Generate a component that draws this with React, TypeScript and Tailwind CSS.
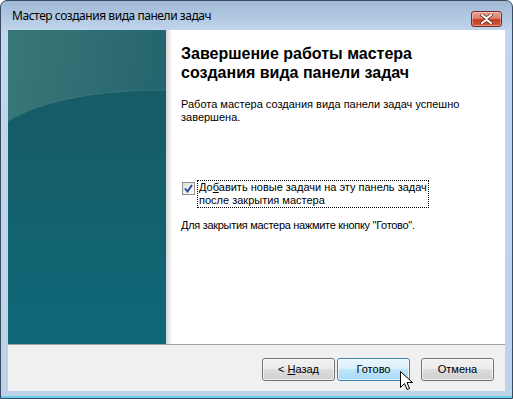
import React from "react";

const body = { fontFamily: '"Liberation Sans", Arial, sans-serif' } as React.CSSProperties;

function Btn({ children, hot }: { children: React.ReactNode; hot?: boolean }) {
  return (
    <div
      className={
        "relative flex h-[23px] w-[73px] items-center justify-center rounded-[3px] border text-[11px] text-black " +
        (hot
          ? "border-[#3c7fb1] bg-[linear-gradient(to_bottom,#eaf6fd_0%,#d9f0fc_50%,#bee6fd_50%,#a7d9f5_100%)]"
          : "border-[#707070] bg-[linear-gradient(to_bottom,#f2f2f2_0%,#ebebeb_50%,#dddddd_50%,#cfcfcf_100%)]")
      }
      style={body}
    >
      <div className="pointer-events-none absolute inset-0 rounded-[2px] border border-white/70" />
      <span className="relative">{children}</span>
    </div>
  );
}

export default function App() {
  return (
    <div className="h-[399px] w-[513px] bg-white">
      <div className="flex h-[399px] w-[513px] flex-col overflow-hidden rounded-t-[7px] border border-[#394b5f] bg-[linear-gradient(to_bottom,#9fb9d5_0px,#b6cce5_20px,#c2d6ed_30px,#bdd3ea_100%)] shadow-[inset_0_-2px_0_#6fcfeb]">
        {/* title bar */}
        <div className="relative flex h-[29px] shrink-0 items-center pl-[11px]">
          <span
            className="text-[12px] text-black"
            style={{ fontFamily: '"Noto Sans", "Open Sans", sans-serif', letterSpacing: "-0.45px" }}
          >
            Мастер создания вида панели задач
          </span>
          <div className="absolute right-[10px] top-[10px] flex h-[16px] w-[31px] items-center justify-center rounded-[3px] border border-[#7a2a24] bg-[linear-gradient(to_bottom,#eba395_0%,#dc7f6c_45%,#c23a22_55%,#d35c40_100%)] shadow-[inset_0_0_0_1px_rgba(255,255,255,0.35)]">
            <svg width="13" height="10" viewBox="0 0 13 10">
              <path d="M2 1 L6.5 4.3 L11 1 M2 9 L6.5 5.7 L11 9" stroke="#5a2a24" strokeWidth="3.4" fill="none" strokeLinecap="square" />
              <path d="M2 1 L6.5 4.3 L11 1 M2 9 L6.5 5.7 L11 9" stroke="#ffffff" strokeWidth="2" fill="none" strokeLinecap="square" />
            </svg>
          </div>
        </div>
        {/* client */}
        <div className="mx-[7px] mb-[7px] flex flex-1 flex-col bg-[#f0f0f0]">
          <div className="flex h-[314px] shrink-0">
            <div className="w-[158px] shrink-0">
              <svg width="158" height="314" viewBox="0 0 158 314">
                <defs>
                  <linearGradient id="tg" x1="0" y1="0" x2="1" y2="0.35">
                    <stop offset="0" stopColor="#3a7878" />
                    <stop offset="1" stopColor="#23636c" />
                  </linearGradient>
                  <linearGradient id="bg2" x1="0" y1="0" x2="0" y2="1">
                    <stop offset="0" stopColor="#175b65" />
                    <stop offset="1" stopColor="#0f6878" />
                  </linearGradient>
                </defs>
                <rect width="158" height="314" fill="url(#tg)" />
                <path d="M0 91 C35 70 90 60 158 60 L158 314 L0 314 Z" fill="url(#bg2)" />
                <path d="M0 91 C35 70 90 60 158 60" stroke="#4a8888" strokeWidth="1" fill="none" opacity="0.5" />
              </svg>
            </div>
            <div className="relative flex-1 bg-white pl-[15px]" style={body}>
              <div className="pointer-events-none absolute inset-y-0 left-0 w-[6px] bg-[linear-gradient(to_right,#d4d4d4,#ffffff)]" />
              <div
                className="relative pt-[14px] text-[16px] font-bold leading-[19px] text-black"
                style={{ fontFamily: '"Liberation Sans", Arial, sans-serif' }}
              >
                Завершение работы мастера
                <br />
                создания вида панели задач
              </div>
              <div className="relative mt-[16px] text-[11px] leading-[13px] text-black">
                Работа мастера создания вида панели задач успешно
                <br />
                завершена.
              </div>
              <div className="relative mt-[56px] flex items-start">
                <div className="ml-[1px] mt-[2px] flex h-[13px] w-[13px] items-center justify-center border border-[#8e8f8f] bg-[linear-gradient(135deg,#dcdcdc,#ffffff)]">
                  <svg width="9" height="9" viewBox="0 0 9 9">
                    <path d="M1 4.5 L3.5 7.5 L8 1" stroke="#21409a" strokeWidth="1.8" fill="none" />
                  </svg>
                </div>
                <div className="ml-[2px] border border-dotted border-black px-[1px] text-[11px] leading-[13px] text-black">
                  До<span className="underline">б</span>авить новые задачи на эту панель задач
                  <br />
                  после закрытия мастера
                </div>
              </div>
              <div className="relative mt-[11px] text-[11px] leading-[13px] text-black" style={{ letterSpacing: "-0.3px" }}>
                Для закрытия мастера нажмите кнопку "Готово".
              </div>
            </div>
          </div>
          <div className="h-px bg-[#a0a0a0]" />
          <div className="flex flex-1 items-start pt-[13px] pl-[254px]">
            <Btn>
              &lt; <span className="underline">Н</span>азад
            </Btn>
            <div className="relative ml-[2px]">
              <Btn hot>Готово</Btn>
              <svg className="absolute left-[63px] top-[13px]" width="13" height="21" viewBox="0 0 13 21">
                <path d="M0.5 0.5 L0.5 16.5 L4.5 12.5 L7 18.5 L9.5 17.5 L7 11.5 L12.5 11.5 Z" fill="#ffffff" stroke="#000000" strokeWidth="1" strokeLinejoin="miter" />
              </svg>
            </div>
            <div className="ml-[11px]">
              <Btn>Отмена</Btn>
            </div>
          </div>
        </div>
      </div>
    </div>
  );
}
